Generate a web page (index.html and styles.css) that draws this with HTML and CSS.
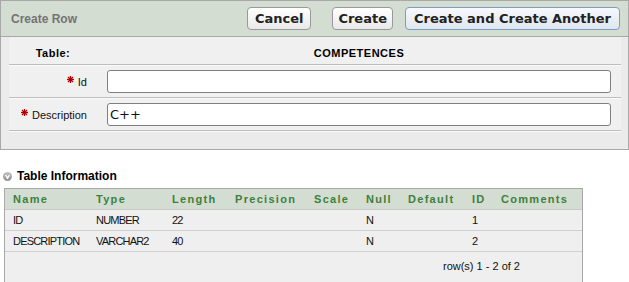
FILE: index.html
```html
<!DOCTYPE html>
<html>
<head>
<meta charset="utf-8">
<link rel="stylesheet" href="styles.css">
</head>
<body>
<div class="region">
  <div class="region-header">
    <div class="region-title">Create Row</div>
    <div class="buttons">
      <button class="btn btn-cancel">Cancel</button>
      <button class="btn btn-create">Create</button>
      <button class="btn btn-hot">Create and Create Another</button>
    </div>
  </div>
  <div class="region-body">
    <div class="form">
      <div class="form-row form-head">
        <div class="head-label">Table:</div>
        <div class="head-value">COMPETENCES</div>
      </div>
      <div class="form-row">
        <label class="field-label" for="f-id"><svg class="req" viewBox="0 0 7 7" width="7" height="7"><g stroke="#b00000" stroke-width="1.3"><line x1="3.5" y1="0" x2="3.5" y2="7"/><line x1="0" y1="3.5" x2="7" y2="3.5"/><line x1="1" y1="1" x2="6" y2="6"/><line x1="6" y1="1" x2="1" y2="6"/></g></svg><span>Id</span></label>
        <div class="field-value"><input id="f-id" class="text-input" type="text" value=""></div>
      </div>
      <div class="form-row">
        <label class="field-label" for="f-desc"><svg class="req" viewBox="0 0 7 7" width="7" height="7"><g stroke="#b00000" stroke-width="1.3"><line x1="3.5" y1="0" x2="3.5" y2="7"/><line x1="0" y1="3.5" x2="7" y2="3.5"/><line x1="1" y1="1" x2="6" y2="6"/><line x1="6" y1="1" x2="1" y2="6"/></g></svg><span>Description</span></label>
        <div class="field-value"><input id="f-desc" class="text-input" type="text" value="C++"></div>
      </div>
    </div>
  </div>
</div>

<div class="info-heading">
  <svg class="toggle" viewBox="0 0 9 9" width="9" height="9">
    <defs><linearGradient id="g" x1="0" y1="0" x2="0" y2="1"><stop offset="0" stop-color="#c4c4c4"/><stop offset="1" stop-color="#8e8e8e"/></linearGradient></defs>
    <circle cx="4.5" cy="4.5" r="4.5" fill="url(#g)"/>
    <polyline points="2.6,3 4.5,6.2 6.4,3" fill="none" stroke="#fff" stroke-width="1.4"/>
  </svg>
  <span>Table Information</span>
</div>

<table class="info-table">
  <colgroup>
    <col style="width:83px"><col style="width:76px"><col style="width:63px"><col style="width:79px"><col style="width:52px"><col style="width:42px"><col style="width:64px"><col style="width:29px"><col style="width:89px">
  </colgroup>
  <thead>
    <tr><th>Name</th><th>Type</th><th>Length</th><th>Precision</th><th>Scale</th><th>Null</th><th>Default</th><th>ID</th><th>Comments</th></tr>
  </thead>
  <tbody>
    <tr><td>ID</td><td>NUMBER</td><td>22</td><td></td><td></td><td>N</td><td></td><td>1</td><td></td></tr>
    <tr><td>DESCRIPTION</td><td>VARCHAR2</td><td>40</td><td></td><td></td><td>N</td><td></td><td>2</td><td></td></tr>
    <tr class="pager"><td colspan="9">row(s) 1 - 2 of 2</td></tr>
  </tbody>
</table>
</body>
</html>
```
FILE: styles.css
```css
html, body {
  margin: 0;
  padding: 0;
  background: #ffffff;
  font-family: "Liberation Sans", Arial, sans-serif;
  color: #000;
}

.region {
  width: 629px;
  box-sizing: border-box;
  border: 1px solid #a8a8a8;
  background: #ebebeb;
}

.region-header {
  height: 35px;
  border-bottom: 1px solid #a8a8a8;
  background: #d4ddd1;
  display: flex;
  align-items: center;
  justify-content: space-between;
  padding: 0 8px 0 10px;
}

.region-title {
  font-size: 12px;
  font-weight: bold;
  color: #737373;
}

.buttons {
  display: flex;
  align-items: center;
}

.btn {
  height: 23px;
  box-sizing: border-box;
  margin: 0;
  padding: 0 6px;
  border: 1px solid #9a9a9a;
  border-radius: 4px;
  background: linear-gradient(#ffffff, #e9e9e9);
  font-family: "DejaVu Sans", sans-serif;
  font-size: 13px;
  font-weight: bold;
  color: #222;
  line-height: 20px;
}

.btn-cancel {
  padding: 0 7px;
}

.btn-create {
  margin-left: 21px;
  padding: 0 5px;
}

.btn-hot {
  margin-left: 12px;
  padding: 0 8px;
  border-color: #7d9bc4;
  background: linear-gradient(#f7f9fc, #dfe6ef);
}

.region-body {
  padding: 0 7px 18px 8px;
}

.form {
  background: #f0f0f0;
}

.form-row {
  display: grid;
  grid-template-columns: 88px 1fr;
  height: 32px;
  border-bottom: 1px solid #bdbdbd;
  box-shadow: 0 1px 0 #fafafa;
}

.form-head {
  height: 27px;
  font-size: 11px;
  font-weight: bold;
  letter-spacing: 0.5px;
  line-height: 14px;
}

.head-label,
.head-value {
  text-align: center;
  padding-top: 9px;
}

.field-label {
  display: flex;
  justify-content: flex-end;
  align-items: flex-start;
  padding: 10px 10px 0 0;
  font-size: 11px;
  line-height: 14px;
  color: #111;
}

.req {
  margin: 1px 4px 0 0;
  flex: none;
}

.field-value {
  padding: 5px 10px 0 10px;
}

.text-input {
  display: block;
  width: 100%;
  height: 23px;
  box-sizing: border-box;
  margin: 0;
  padding: 0 2px;
  border: 1px solid #7f7f7f;
  border-radius: 3px;
  background: #fff;
  font-family: "DejaVu Sans", sans-serif;
  font-size: 13px;
  color: #111;
  outline: none;
}

.info-heading {
  display: flex;
  align-items: center;
  height: 16px;
  margin: 18px 0 0 3px;
  font-size: 12px;
  font-weight: bold;
}

.toggle {
  margin-right: 5px;
}

.info-table {
  margin: 4px 0 0 4px;
  width: 579px;
  table-layout: fixed;
  border-collapse: separate;
  border-spacing: 0;
  border: 1px solid #a8a8a8;
  background: #efefef;
  font-size: 11px;
}

.info-table th {
  height: 20px;
  padding: 0 0 0 8px;
  text-align: left;
  background: #d4ddd1;
  color: #3e803e;
  font-weight: bold;
  letter-spacing: 1.3px;
  border-bottom: 1px solid #c8c8c8;
}

.info-table td {
  height: 20px;
  padding: 0 0 0 8px;
  letter-spacing: -0.8px;
  color: #111;
  border-bottom: 1px solid #cfcfcf;
  white-space: nowrap;
}

.info-table .pager td {
  height: 28px;
  padding: 0 62px 2px 0;
  text-align: right;
  letter-spacing: 0;
  border-bottom: none;
}
```
